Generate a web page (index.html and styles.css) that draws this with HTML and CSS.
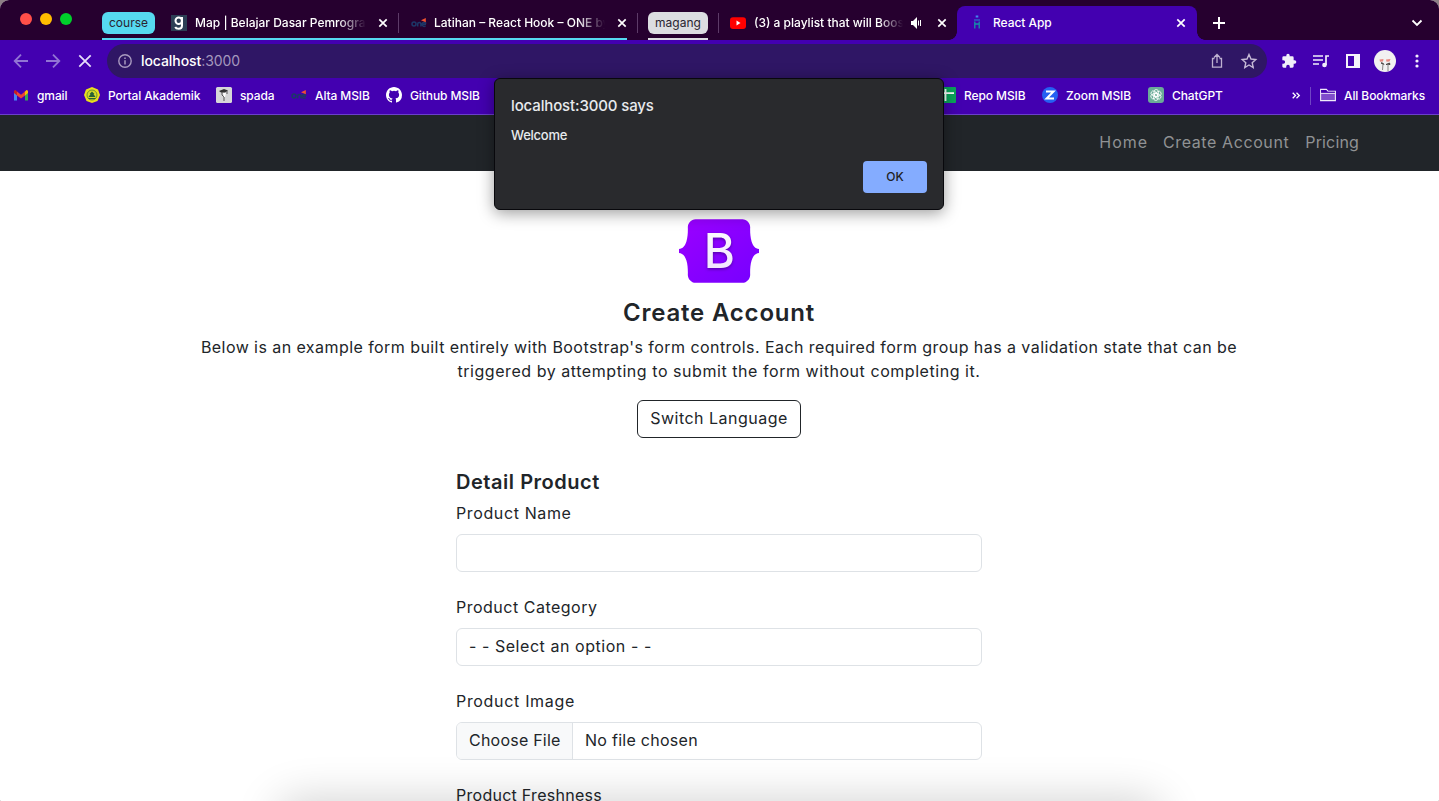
FILE: index.html
```html
<!DOCTYPE html>
<html lang="en">
<head>
<meta charset="utf-8">
<title>React App</title>
<link rel="stylesheet" href="styles.css">
</head>
<body>
<svg class="defs" width="0" height="0">
  <symbol id="close" viewBox="0 0 10 10"><path d="M1.3 1.3l7.4 7.4M8.7 1.3L1.3 8.7" fill="none" stroke="currentColor" stroke-width="1.7"/></symbol>
  <symbol id="one" viewBox="0 0 16 16"><g fill="none" stroke="#1d3768" stroke-width="1.5"><circle cx="3" cy="9" r="2"/><path d="M6.7 11.5V9a1.6 1.6 0 0 1 3.2 0v2.5M12 9.2h3M15 8.6A2 2 0 1 0 14.6 10.800"/></g><path d="M10 5.200L14.800 3v4.200z" fill="#ef5130"/></symbol>
</svg>
<div class="window">
  <div class="tabstrip">
    <div class="lights"><i class="light red"></i><i class="light yellow"></i><i class="light green"></i></div>
    <div class="group group-course">
      <span class="chip chip-course">course</span>
      <div class="tab tab-map">
        <svg class="fav" viewBox="0 0 16 16"><path fill="#2c3f55" d="M0 0h16v16H0z"/><g fill="none" stroke="#fff" stroke-width="2"><circle cx="7.700" cy="5.800" r="3.200"/><path d="M11 2v8.500q0 3.300-3.300 3.300-2.700 0-3.500-1.800"/></g></svg>
        <span class="title t1">Map | Belajar Dasar Pemrogram</span>
        <svg class="x"><use href="#close"/></svg>
      </div>
      <div class="tab tab-hook">
        <svg class="fav"><use href="#one"/></svg>
        <span class="title t2">Latihan – React Hook – ONE by</span>
        <svg class="x"><use href="#close"/></svg>
      </div>
    </div>
    <div class="group group-magang"><span class="chip chip-magang">magang</span></div>
    <div class="tab tab-playlist">
      <svg class="fav" viewBox="0 0 16 16"><rect y="2.200" width="16" height="11.800" rx="3" fill="#f00"/><path d="M6.500 5.600v4.800l4-2.400z" fill="#fff"/></svg>
      <span class="title t3">(3) a playlist that will Boost</span>
      <svg class="speaker" viewBox="0 0 12 12"><path d="M0 4h2l4-4v12L2 8H0z" fill="#fff"/><path d="M7.500 3.500v5M9.500 3v6" stroke="#fff" stroke-width="1"/></svg>
      <svg class="x"><use href="#close"/></svg>
    </div>
    <div class="tab tab-active">
      <svg class="fav" viewBox="0 0 16 16"><g fill="none" stroke-width="1.300"><path d="M6.700 1.500h2.600" stroke="#4385f0" stroke-width="2"/><path d="M5 5h6" stroke="#2b6acb"/><path d="M5.800 6.500v7M10.200 6.500v7M5.800 9h4.400" stroke="#1493a8"/></g></svg>
      <span class="title t4">React App</span>
      <svg class="x"><use href="#close"/></svg>
    </div>
    <svg class="plus" viewBox="0 0 12 12"><path d="M6 0v12M0 6h12" stroke="#fff" stroke-width="2"/></svg>
    <svg class="chevron" viewBox="0 0 12 8"><path d="M1.500 1.500L6 6l4.500-4.500" fill="none" stroke="#fff" stroke-width="1.800"/></svg>
  </div>

  <div class="toolbar">
    <svg class="nav-icon dim" viewBox="0 0 16 16"><path d="M15 8H2M8 1.700L1.700 8 8 14.300"/></svg>
    <svg class="nav-icon dim" viewBox="0 0 16 16"><path d="M1 8h13M8 1.700L14.300 8 8 14.300"/></svg>
    <svg class="nav-icon" viewBox="0 0 16 16"><path d="M2.300 2.300l11.400 11.400M13.700 2.300L2.300 13.700"/></svg>
    <div class="omnibox">
      <svg class="info" viewBox="0 0 14 14"><circle cx="7" cy="7" r="6.200" fill="none" stroke="#a99abf" stroke-width="1.400"/><path d="M7 6.200v4.300M7 3.500v1.500" stroke="#a99abf" stroke-width="1.500"/></svg>
      <span class="url">localhost<span class="port">:3000</span></span>
      <svg class="share" viewBox="0 0 14 16"><path d="M4.500 5.500h-2v8.700h9V5.500h-2M7 10V1.800M4 4.500l3-3 3 3" fill="none" stroke="#beb1d0" stroke-width="1.300"/></svg>
      <svg class="star" viewBox="0 0 16 16"><path d="M8 1.500l2 4.500 4.800.5-3.600 3.200 1 4.800L8 12l-4.200 2.500 1-4.800L1.200 6.500 6 6z" fill="none" stroke="#c6bad6" stroke-width="1.400"/></svg>
    </div>
    <svg class="tool" viewBox="0 0 24 24"><path fill="#f1eefa" d="M20.500 11H19V7a2 2 0 0 0-2-2h-4V3.500a2.500 2.500 0 0 0-5 0V5H4a2 2 0 0 0-2 2v3.800h1.500a2.700 2.700 0 0 1 0 5.400H2V20c0 1.100.9 2 2 2h3.800v-1.500a2.700 2.700 0 0 1 5.400 0V22H17a2 2 0 0 0 2-2v-4h1.500a2.500 2.500 0 0 0 0-5z"/></svg>
    <svg class="tool" viewBox="0 0 16 16"><path d="M0 3h10M0 7h10M0 11h6M13 12V3h3" fill="none" stroke="#f1eefa" stroke-width="1.700"/><circle cx="11.500" cy="12" r="2.300" fill="#f1eefa"/></svg>
    <svg class="tool" viewBox="0 0 16 16"><path fill="#f5f2fa" fill-rule="evenodd" d="M1 1h14v14H1zM3 3v10h6V3z"/></svg>
    <svg class="avatar" viewBox="0 0 22 22"><circle cx="11" cy="11" r="11" fill="#f2f1f1"/><path d="M5.500 9.500l4-.5-.5 2.500-3 .2zM12 9.500l4.500-.5-1 2.500-3 .3z" fill="#e9897f"/><path d="M7 13q1.500-1 3 1.500zM12 14.500l3.500-1.500.5 1.500z" fill="#46423f" stroke="#46423f" stroke-width=".9"/><path d="M9 14l-.5 6M14 14v7" stroke="#8a8784" stroke-width="1"/></svg>
    <svg class="dots" viewBox="0 0 4 14"><g fill="#f3effc"><circle cx="2" cy="2" r="1.600"/><circle cx="2" cy="7" r="1.600"/><circle cx="2" cy="12" r="1.600"/></g></svg>
  </div>

  <div class="bookmarks">
    <div class="bm bm-gmail"><svg class="fav" viewBox="0 0 16 16"><path d="M1 4v9.500h3V7z" fill="#4285f4"/><path d="M12 7v6.500h3V4z" fill="#34a853"/><path d="M12 4.500L13.500 3q1.500-.2 1.500 1.500V6l-3 2.500z" fill="#fbbc04"/><path d="M4 4.500L8 7.700l4-3.200v4L8 11.500l-4-3z" fill="#ea4335"/><path d="M4 4.500L2.500 3Q1 2.800 1 4.500V6l3 2.500z" fill="#c5221f"/></svg><span>gmail</span></div>
    <div class="bm bm-portal"><svg class="fav" viewBox="0 0 16 16"><path d="M8 0l6 2.500 2 5.500-2.500 6L8 16l-5.500-2L0 8l2-5.500z" fill="#e9df1c"/><circle cx="8" cy="8" r="5" fill="#d5d92a" stroke="#6f9430" stroke-width="1"/><path d="M8 4.500l2.500 2.500H9.500l2 3h-7l2-3H5.500z" fill="#286235"/><path d="M4.500 11.500h7" stroke="#286235"/></svg><span>Portal Akademik</span></div>
    <div class="bm bm-spada"><svg class="fav" viewBox="0 0 16 16"><rect width="16" height="16" rx="1.500" fill="#d6d6d8"/><path d="M3 4l5-2 4 1.500-3 2H5z" fill="#333"/><path d="M6 5v3l2 2v4M11 4v3" fill="none" stroke="#555"/><path d="M7 6h3l-1 4H8z" fill="#fff"/></svg><span>spada</span></div>
    <div class="bm bm-alta"><svg class="fav"><use href="#one"/></svg><span>Alta MSIB</span></div>
    <div class="bm bm-github"><svg class="fav" viewBox="0 0 16 16"><path fill="#fff" d="M8 0C3.580 0 0 3.580 0 8c0 3.540 2.290 6.530 5.470 7.590.4.070.55-.17.55-.38 0-.19-.01-.82-.01-1.490-2.010.37-2.530-.49-2.690-.94-.09-.23-.48-.94-.82-1.130-.28-.15-.68-.52-.01-.53.63-.01 1.080.58 1.230.82.72 1.210 1.870.87 2.330.66.07-.52.28-.87.51-1.070-1.780-.2-3.640-.89-3.640-3.950 0-.87.31-1.590.82-2.150-.08-.2-.36-1.020.08-2.120 0 0 .67-.21 2.200.82a7.600 7.600 0 0 1 4 0c1.530-1.040 2.200-.82 2.200-.82.44 1.100.16 1.920.08 2.120.51.56.82 1.270.82 2.150 0 3.070-1.870 3.750-3.650 3.950.29.25.54.73.54 1.480 0 1.070-.01 1.930-.01 2.200 0 .21.15.46.55.38A8.010 8.010 0 0 0 16 8c0-4.420-3.580-8-8-8z"/></svg><span>Github MSIB</span></div>
    <div class="bm bm-repo"><svg class="fav" viewBox="0 0 16 16"><rect width="16" height="16" rx="1" fill="#0aa45b"/><path d="M2 6.200h12M5.500 2v12" stroke="#fff" stroke-width="1.800"/></svg><span>Repo MSIB</span></div>
    <div class="bm bm-zoom"><svg class="fav" viewBox="0 0 16 16"><circle cx="8" cy="8" r="8" fill="#2560f2"/><path d="M4 4.500h7.500L4.600 11.500H12" fill="none" stroke="#fff" stroke-width="2"/></svg><span>Zoom MSIB</span></div>
    <div class="bm bm-gpt"><svg class="fav" viewBox="0 0 16 16"><rect width="16" height="16" rx="3" fill="#6aab98"/><g fill="none" stroke="#fff" stroke-width=".8"><rect x="6" y="2.500" width="4.400" height="7" rx="2.200"/><rect x="6" y="2.500" width="4.400" height="7" rx="2.200" transform="rotate(60 8 8)"/><rect x="6" y="2.500" width="4.400" height="7" rx="2.200" transform="rotate(120 8 8)"/><rect x="6" y="2.500" width="4.400" height="7" rx="2.200" transform="rotate(180 8 8)"/><rect x="6" y="2.500" width="4.400" height="7" rx="2.200" transform="rotate(240 8 8)"/><rect x="6" y="2.500" width="4.400" height="7" rx="2.200" transform="rotate(300 8 8)"/></g></svg><span>ChatGPT</span></div>
    <div class="bm-end">
      <svg class="more" viewBox="0 0 8 7"><path d="M.7.700l2.800 2.800L.7 6.300M4.500.700l2.800 2.800-2.800 2.800" fill="none" stroke="#fff" stroke-width="1.300"/></svg>
      <div class="bm bm-all"><svg class="fav" viewBox="0 0 16 16"><path d="M.6 13.600V2.400h5.800l1.500 1.800h7.500v9.400z" fill="#7f4ccb" stroke="#f0eafa" stroke-width="1.100"/><path d="M.6 6.300h14.800" stroke="#f0eafa"/><path d="M1.100 3h5l1.500 1.700h7.300v1H1.100z" fill="#4300b0"/></svg><span>All Bookmarks</span></div>
    </div>
  </div>

  <div class="page">
    <nav class="navbar"><a class="n1">Home</a><a class="n2">Create Account</a><a class="n3">Pricing</a></nav>
    <main class="content">
      <svg class="logo" viewBox="0 0 118 94">
        <defs><linearGradient id="lg" x1="0" y1="0" x2="1" y2="1"><stop offset="0" stop-color="#9b00ff"/><stop offset="1" stop-color="#7600ff"/></linearGradient><linearGradient id="bg" x1="0" y1="0" x2="0" y2="1"><stop offset="0" stop-color="#fff"/><stop offset="1" stop-color="#efdfff"/></linearGradient></defs>
        <path fill="url(#lg)" d="M24.509 0c-6.733 0-11.715 5.893-11.492 12.284.214 6.140-.064 14.092-2.066 20.577C8.943 39.365 5.547 43.485 0 44.014v5.972c5.547.529 8.943 4.649 10.951 11.153 2.002 6.485 2.280 14.437 2.066 20.577C12.794 88.106 17.776 94 24.510 94H93.500c6.733 0 11.714-5.893 11.491-12.284-.214-6.140.064-14.092 2.066-20.577 2.009-6.504 5.396-10.624 10.943-11.153v-5.972c-5.547-.529-8.934-4.649-10.943-11.153-2.002-6.484-2.280-14.437-2.066-20.577C105.214 5.894 100.233 0 93.500 0H24.508z"/>
        <text class="logo-b" x="59.500" y="72.500" text-anchor="middle" fill="url(#bg)">B</text>
      </svg>
      <h2 class="heading">Create Account</h2>
      <p class="lead"><span class="l1">Below is an example form built entirely with Bootstrap's form controls. Each required form group has a validation state that can be</span><br><span class="l2">triggered by attempting to submit the form without completing it.</span></p>
      <button class="switch">Switch Language</button>
      <form class="form">
        <h5 class="subheading">Detail Product</h5>
        <label class="label f1">Product Name</label>
        <div class="control"></div>
        <label class="label f2">Product Category</label>
        <div class="control"><span class="pad option">- - Select an option - -</span></div>
        <label class="label f3">Product Image</label>
        <div class="control"><span class="pad choose">Choose File</span><span class="pad none">No file chosen</span></div>
        <label class="label f4">Product Freshness</label>
      </form>
    </main>
    <div class="dock-shadow"></div>
  </div>

  <div class="dialog">
    <div class="dialog-title">localhost:3000 says</div>
    <div class="dialog-text">Welcome</div>
    <button class="ok">OK</button>
  </div>
</div>
</body>
</html>
```

FILE: styles.css
```css
* { box-sizing: border-box; }
body { margin: 0; background: #8d7f86; font-family: Inter, "Liberation Sans", sans-serif; overflow: hidden; }
svg { display: block; flex: none; overflow: visible; }
.defs { position: absolute; }
.window { position: relative; width: 1439px; height: 801px; overflow: hidden; border-radius: 9px 9px 1px 1px; background: #fff; }

.tabstrip { display: flex; height: 40px; background: #26002f; color: #fff; font-size: 12px; font-weight: 500; }
.lights { display: flex; gap: 8px; padding: 13px 0 0 20px; width: 102px; flex: none; }
.light { width: 12px; height: 12px; border-radius: 50%; }
.red { background: #ff4f49; }
.yellow { background: #ffbd00; }
.green { background: #00d02b; }
.group { display: flex; height: 40px; flex: none; }
.group-course { width: 525px; border-bottom: 2px solid #56d9f0; }
.group-magang { width: 60px; margin-left: 21px; border-bottom: 2px solid #dcdde1; }
.chip { height: 22px; margin-top: 12px; border-radius: 6px; color: #2a2430; line-height: 22px; text-align: center; font-weight: 400; font-size: 12px; flex: none; white-space: nowrap; }
.chip-course { width: 53px; background: #56d9f0; }
.chip-magang { width: 60px; background: #dcdde1; }
.fav { width: 16px; height: 16px; }
.tab { display: flex; align-items: center; height: 34px; margin-top: 6px; flex: none; position: relative; }
.tab .fav { margin-right: 8px; }
.title { overflow: hidden; white-space: nowrap; flex: none; line-height: 18px; }
.x { width: 10px; height: 10px; }
.tab-map { width: 243px; padding-left: 16px; }
.t1, .t2 { width: 171px; margin-right: 12px; mask-image: linear-gradient(90deg, #000 84%, transparent); }
.tab-hook { padding-left: 13px; }
.tab-hook::before, .tab-playlist::before, .tab-playlist::after { content: ""; position: absolute; left: 0; top: 7px; width: 1px; height: 20px; background: #5d3b68; }
.tab-hook .fav { margin-right: 7px; }
.tab-playlist { width: 239px; margin-left: 10px; padding-left: 12px; }
.tab-playlist::after { left: -81px; }
.t3 { width: 149px; margin-right: 8px; mask-image: linear-gradient(90deg, #000 84%, transparent); }
.speaker { width: 12px; height: 12px; margin-right: 14px; }
.tab-active { width: 240px; background: #4300b0; border-radius: 8px 8px 0 0; padding-left: 12px; }
.tab-active::before, .tab-active::after { content: ""; position: absolute; bottom: 0; width: 8px; height: 8px; }
.tab-active::before { left: -8px; background: radial-gradient(circle at 0 0, transparent 7.5px, #4300b0 8px); }
.tab-active::after { right: -8px; background: radial-gradient(circle at 100% 0, transparent 7.5px, #4300b0 8px); }
.t4 { width: 183px; letter-spacing: -.05px; }
.plus { width: 12px; height: 12px; margin: 17px 0 0 16px; }
.chevron { width: 12px; height: 8px; margin: 19px 16px 0 auto; }

.toolbar { display: flex; align-items: center; height: 38px; padding: 4px 0 0 13px; background: #4300b0; }
.nav-icon { width: 16px; height: 16px; margin-right: 16px; fill: none; stroke: #e6dcfa; stroke-width: 1.8; }
.dim { stroke: #9274d4; }
.omnibox { display: flex; align-items: center; width: 1160px; height: 34px; margin-left: -2px; margin-right: 14px; padding: 0 10px 0 11px; border-radius: 17px; background: #2f1665; flex: none; }
.info { width: 14px; height: 14px; margin-right: 9px; }
.url { color: #fff; font-size: 14px; font-weight: 500; flex: 1; line-height: 20px; letter-spacing: -.07px; }
.port { color: #a598bd; font-weight: 400; }
.share { width: 14px; height: 16px; margin-right: 17px; }
.star { width: 16px; height: 16px; }
.tool { width: 16px; height: 16px; margin-right: 16px; }
.avatar { width: 22px; height: 22px; margin: 0 19px 0 -3px; }
.dots { width: 4px; height: 14px; }

.bookmarks { display: flex; align-items: center; height: 37px; padding: 0 15px 1px 13px; background: #4300b0; border-bottom: 1px solid #6b3fca; color: #fff; font-size: 12px; font-weight: 500; letter-spacing: -.1px; }
.bm { display: flex; gap: 8px; flex: none; white-space: nowrap; line-height: 18px; }
.bm-gmail { width: 71px; }
.bm-portal { width: 132px; }
.bm-spada { width: 75px; }
.bm-alta { width: 95px; }
.bm-github { width: 554px; }
.bm-repo { width: 102px; }
.bm-zoom { width: 106px; }
.bm-end { display: flex; align-items: center; margin-left: auto; }
.more { width: 8px; height: 7px; margin-right: 10px; }
.bm-all { width: 114px; padding-left: 9px; border-left: 1px solid #7045c4; }

.page { position: relative; height: 686px; color: #212529; font-size: 16px; overflow: hidden; }
.navbar { display: flex; justify-content: flex-end; gap: 16px; height: 56px; padding: 15px 80px 0 0; background: #212529; color: #909294; line-height: 24px; }
.n1 { letter-spacing: .95px; margin-right: -1px; }
.n2 { letter-spacing: .6px; }
.n3 { letter-spacing: .15px; }
.content { display: flex; flex-direction: column; align-items: center; width: 1438px; padding-top: 48px; }
.logo { width: 80px; height: 64px; }
.logo-b { font: 500 70px Inter, sans-serif; filter: drop-shadow(0 2px 2px #5400a8); }
.heading { margin: 15px 0 8px; font-size: 24px; line-height: 29px; font-weight: 600; white-space: nowrap; letter-spacing: .8px; }
.lead { margin: 0 0 16px; line-height: 24px; text-align: center; white-space: nowrap; height: 49px; }
.l1 { letter-spacing: .435px; }
.l2 { letter-spacing: .55px; }
.switch { width: 164px; height: 38px; padding: 0 0 2px; border: 1px solid #212529; border-radius: 6px; background: #fff; color: #212529; font: inherit; letter-spacing: .48px; white-space: nowrap; }
.form { width: 526px; margin-top: 32px; }
.subheading { margin: 0 0 8px; font-size: 20px; line-height: 24px; font-weight: 600; letter-spacing: .53px; }
.label { display: block; height: 24px; line-height: 22px; margin: 0 0 8px; }
.f1 { letter-spacing: .62px; }
.f2 { letter-spacing: .5px; }
.f3 { letter-spacing: .68px; }
.f4 { letter-spacing: .27px; }
.control { display: flex; height: 38px; margin-bottom: 24px; border: 1px solid #dee2e6; border-radius: 6px; line-height: 34px; overflow: hidden; }
.pad { padding: 0 12px; white-space: nowrap; }
.option { letter-spacing: .55px; }
.choose { width: 116px; background: #f8f9fa; border-right: 1px solid #dee2e6; letter-spacing: .22px; }
.none { letter-spacing: .27px; }
.dock-shadow { position: absolute; left: 280px; right: 280px; bottom: -42px; height: 40px; border-radius: 20px; box-shadow: 0 0 44px 4px rgba(0, 0, 0, .18); }

.dialog { position: absolute; left: 494px; top: 78px; width: 450px; height: 132px; padding: 17px 16px; border: 1px solid #08080c; border-radius: 6px; background: #292a2d; color: #e8eaed; box-shadow: 0 3px 16px rgba(0, 0, 0, .4); }
.dialog-title { font-size: 15px; line-height: 20px; font-weight: 500; letter-spacing: -.13px; }
.dialog-text { margin-top: 9px; font-size: 13px; line-height: 20px; font-weight: 500; letter-spacing: -.25px; }
.ok { display: block; margin: 16px 0 0 auto; width: 64px; height: 32px; padding: 0 0 1px; border: 0; border-radius: 4px; background: #84acff; color: #202124; font: 500 12px Inter, sans-serif; }
```
